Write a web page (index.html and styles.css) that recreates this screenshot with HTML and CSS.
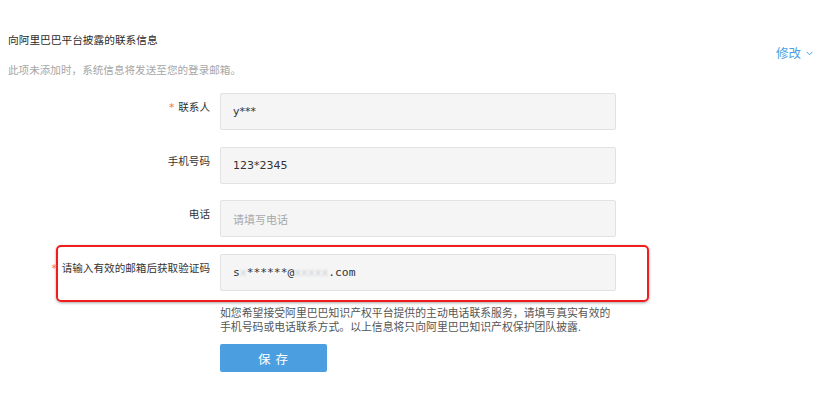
FILE: index.html
```html
<!DOCTYPE html>
<html lang="zh-CN">
<head>
<meta charset="utf-8">
<title>联系信息</title>
<link rel="stylesheet" href="styles.css">
</head>
<body>
<div class="panel">
  <header class="panel-head">
    <div class="head-text">
      <div class="title">向阿里巴巴平台披露的联系信息</div>
      <div class="subtitle">此项未添加时，系统信息将发送至您的登录邮箱。</div>
    </div>
    <a class="edit-link">修改
      <svg class="chev" width="7" height="5" viewBox="0 0 7 5"><path d="M0.5 0.8 L3.5 3.8 L6.5 0.8" fill="none" stroke="currentColor" stroke-width="1"/></svg>
    </a>
  </header>

  <form class="form">
    <div class="row">
      <label class="label"><span class="req">*</span>联系人</label>
      <div class="field">y***</div>
    </div>
    <div class="row">
      <label class="label">手机号码</label>
      <div class="field">123*2345</div>
    </div>
    <div class="row">
      <label class="label">电话</label>
      <div class="field placeholder">请填写电话</div>
    </div>
    <div class="row row-mail">
      <div class="highlight"></div>
      <label class="label"><span class="req">*</span>请输入有效的邮箱后获取验证码</label>
      <div class="field mono">s<span class="masked">x</span>******@<span class="masked">xxxxx</span>.com</div>
    </div>
    <div class="row-extra">
      <p class="help">如您希望接受阿里巴巴知识产权平台提供的主动电话联系服务，请填写真实有效的<br>手机号码或电话联系方式。以上信息将只向阿里巴巴知识产权保护团队披露.</p>
      <button type="button" class="btn-save">保 存</button>
    </div>
  </form>
</div>
</body>
</html>
```

FILE: styles.css
```css
* { box-sizing: border-box; }

html, body {
  margin: 0;
  background: #fff;
}

body {
  font-family: "DejaVu Sans", "Noto Sans CJK SC", sans-serif;
  color: #333;
}

.panel {
  padding: 33px 19px 0 8px;
}

.panel-head {
  display: flex;
  justify-content: space-between;
  align-items: center;
}

.title {
  font-size: 10.7px;
  line-height: 16px;
  color: #2b2b2b;
}

.subtitle {
  margin-top: 13px;
  font-size: 10.6px;
  line-height: 16px;
  color: #a6a6a6;
}

.edit-link {
  display: flex;
  align-items: center;
  gap: 5px;
  font-size: 12.5px;
  color: #4d9fe3;
  margin-top: -6px;
}

.chev { display: block; margin-top: 1px; }

.form {
  margin-top: 15px;
  display: flex;
  flex-direction: column;
  gap: 16.7px;
}

.row {
  position: relative;
  display: flex;
  align-items: flex-start;
  gap: 10px;
}

.label {
  position: relative;
  z-index: 1;
  width: 202px;
  text-align: right;
  font-size: 10.6px;
  line-height: 16px;
  padding-top: 6px;
  color: #333;
}

.req {
  color: #f5732a;
  margin-right: 4px;
}

.row-mail .req { margin-right: 5px; }

.field {
  width: 396px;
  height: 37px;
  padding: 0 12px;
  display: flex;
  align-items: center;
  background: #f5f5f5;
  border: 1px solid #e2e2e2;
  border-radius: 2px;
  font-size: 11px;
  color: #333;
}

.placeholder { color: #a9a9a9; }

.mono {
  font-family: "DejaVu Sans Mono", monospace;
  font-size: 11.3px;
  white-space: pre;
}

.masked {
  color: #c8cbd2;
  filter: blur(1.2px);
}

/* red annotation frame around the mail row */
.highlight {
  position: absolute;
  left: 48px;
  top: -9px;
  width: 593px;
  height: 57px;
  border: 2px solid #f01d1d;
  border-radius: 5px;
  box-shadow: 0 1px 3px rgba(0, 0, 0, 0.35);
  pointer-events: none;
}

.row-extra {
  padding-left: 212px;
  margin-top: -0.7px;
}

.help {
  margin: 0;
  font-size: 10.85px;
  line-height: 14px;
  color: #555;
}

.btn-save {
  margin-top: 9px;
  width: 107px;
  height: 28px;
  border: 0;
  border-radius: 2px;
  background: #4b9fe1;
  color: #fff;
  font-family: "Noto Sans CJK SC", sans-serif;
  font-size: 12.5px;
  letter-spacing: 1px;
  padding: 0;
}
```
